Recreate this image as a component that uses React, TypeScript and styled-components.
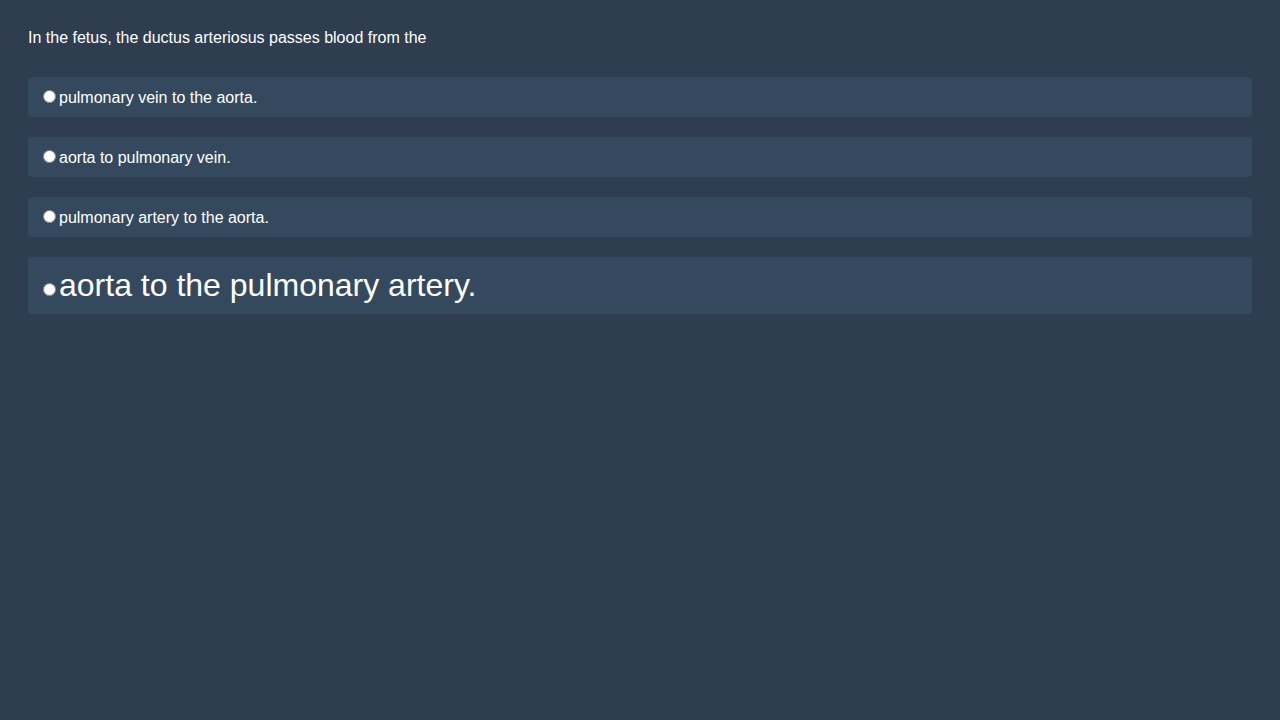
import React, { useState } from "react";
import styled, { createGlobalStyle } from "styled-components";

const GlobalStyle = createGlobalStyle`
  html, body {
    margin: 0;
    padding: 0;
    background: #2e3d50;
  }
  body {
    font-family: "Liberation Sans", Arial, sans-serif;
    color: #ffffff;
  }
`;

const Page = styled.div`
  min-height: 720px;
  padding: 28px;
  box-sizing: border-box;
  background: #2e3d50;
`;

const Question = styled.p`
  margin: 0 0 30px;
  padding-top: 1px;
  font-size: 16px;
`;

const OptionList = styled.div`
  display: flex;
  flex-direction: column;
  gap: 20px;
`;

const Option = styled.label<{ $large?: boolean }>`
  display: block;
  padding: 10px;
  background: #34495e;
  border-radius: 4px;
  font-size: ${({ $large }) => ($large ? "32px" : "16px")};
  cursor: pointer;
`;

const Radio = styled.input`
  margin: 3px 3px 0 5px;
`;

const options = [
  { id: "a", text: "pulmonary vein to the aorta." },
  { id: "b", text: "aorta to pulmonary vein." },
  { id: "c", text: "pulmonary artery to the aorta." },
  { id: "d", text: "aorta to the pulmonary artery.", large: true },
];

const App = () => {
  const [picked, setPicked] = useState<string | null>(null);

  return (
    <>
      <GlobalStyle />
      <Page>
        <Question>In the fetus, the ductus arteriosus passes blood from the</Question>
        <OptionList>
          {options.map(o => (
            <Option key={o.id} $large={o.large}>
              <Radio
                type="radio"
                name="answer"
                checked={picked === o.id}
                onChange={() => setPicked(o.id)}
              />
              {o.text}
            </Option>
          ))}
        </OptionList>
      </Page>
    </>
  );
};

export default App;
